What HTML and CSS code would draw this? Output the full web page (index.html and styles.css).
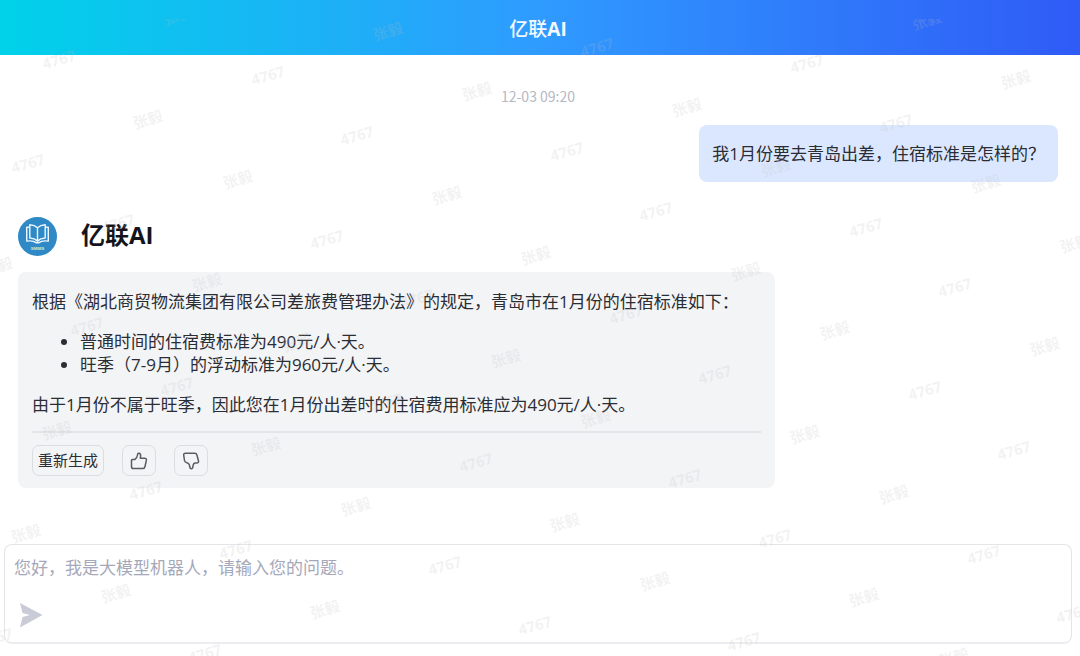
FILE: index.html
```
<!DOCTYPE html>
<html lang="zh-CN">
<head>
<meta charset="utf-8">
<meta name="viewport" content="width=device-width, initial-scale=1">
<title>亿联AI</title>
<link rel="stylesheet" href="styles.css">
</head>
<body>
<div class="app">
  <header class="topbar"><h1 class="topbar-title">亿联<b>AI</b></h1></header>

  <main class="chat">
    <time class="chat-time">12-03 09:20</time>
    <p class="question">我1月份要去青岛出差，住宿标准是怎样的？</p>

    <section class="reply">
      <div class="bot">
        <svg class="bot-avatar" viewBox="0 0 38 38" aria-hidden="true">
          <circle cx="19" cy="19" r="19" fill="#2f89c7"/>
          <g fill="none" stroke="#e9f5fc" stroke-width="1.4" stroke-linejoin="round" stroke-linecap="round">
            <path d="M19 10.500C17 8.500 14.500 7.700 11.500 7.500V20.500C14.500 20.700 17 21.500 19 23.500C21 21.500 23.500 20.700 26.500 20.500V7.500C23.500 7.700 21 8.500 19 10.500V23"/>
            <path d="M11 10H8.500V23.500C12 23 15.500 23.300 17.500 25H20.500C22.500 23.300 26 23 29.500 23.500V10H27"/>
          </g>
          <text class="bot-avatar-label" x="19" y="32.500" text-anchor="middle">SMIMS</text>
        </svg>
        <h2 class="bot-name">亿联AI</h2>
      </div>

      <article class="card">
        <p>根据《湖北商贸物流集团有限公司差旅费管理办法》的规定，青岛市在1月份的住宿标准如下：</p>
        <ul>
          <li>普通时间的住宿费标准为490元/人·天。</li>
          <li>旺季（7-9月）的浮动标准为960元/人·天。</li>
        </ul>
        <p>由于1月份不属于旺季，因此您在1月份出差时的住宿费用标准应为490元/人·天。</p>
        <hr>
        <div class="actions">
          <button class="action action-text" type="button">重新生成</button>
          <button class="action action-icon" type="button" aria-label="赞">
            <svg class="thumb" viewBox="0 0 18 18" aria-hidden="true"><path d="M2.200 7.500H4.800C6.500 6.500 7.200 5 7.500 3C7.700 1.300 8.500 1 9.300 1.200C10.600 1.500 10.700 3 10.600 4.200L10.300 6.200H14.500C16 6.200 16.600 7 16.400 8.200L15 14.500C14.700 15.900 14 16.600 12.700 16.600H3.400C2.200 16.600 1.500 16 1.500 14.800V8.300Q1.500 7.500 2.200 7.500Z"/></svg>
          </button>
          <button class="action action-icon" type="button" aria-label="踩">
            <svg class="thumb thumb-down" viewBox="0 0 18 18" aria-hidden="true"><path d="M3.400 1.300H12.800C14 1.300 14.700 2 15 3.200L16.500 9C16.800 10.300 16.100 11 14.800 11L13 11.100C12 11.300 11.400 12 11.200 13L10.700 15.600C10.500 16.500 10 16.900 9.300 16.800C8.400 16.700 8 16 7.800 15L7.300 12.700C7 11.500 6.200 11 4.900 10.700C3.500 10.400 2.600 9.800 2.500 8.500L1.700 3.200C1.500 2 2.200 1.300 3.400 1.300Z"/></svg>
          </button>
        </div>
      </article>
    </section>
  </main>

  <form class="composer">
    <textarea class="composer-input" rows="1" aria-label="问题" placeholder="您好，我是大模型机器人，请输入您的问题。"></textarea>
    <button class="send" type="button" aria-label="发送">
      <svg class="send-icon" viewBox="0 0 24 26" aria-hidden="true"><path d="M1 1L23.500 13L1 25.500L3.500 15L11 13L3.500 11Z"/></svg>
    </button>
  </form>

  <svg class="watermark" aria-hidden="true"></svg>
</div>
<script src="watermark.js"></script>
</body>
</html>
```
FILE: styles.css
```
* {
  box-sizing: border-box;
}

body {
  margin: 0;
  background: #fff;
  color: #2b2d34;
  font-family: "Open Sans", "Noto Sans CJK SC", sans-serif;
  font-size: 17px;
  line-height: 23px;
}

h1, h2, p, ul {
  margin: 0;
}

button, textarea {
  font: inherit;
  color: inherit;
}

.app {
  position: relative;
  display: flex;
  flex-direction: column;
  min-height: 100vh;
  overflow: hidden;
}

.topbar {
  display: flex;
  align-items: center;
  justify-content: center;
  height: 55px;
  padding: 4px 4px 0 0;
  background: linear-gradient(90deg, #00d2e9 0%, #2f9bff 50%, #2f5bf6 100%);
}

.topbar-title {
  color: #f3f8ff;
  font-size: 19px;
  font-weight: 500;
}

.chat {
  display: flex;
  flex: 1;
  flex-direction: column;
  padding: 30px 22px 0 18px;
}

.chat-time {
  align-self: center;
  color: #b6b8c3;
  font-family: "Noto Sans CJK SC", sans-serif;
  font-size: 14px;
}

.question {
  align-self: flex-end;
  margin-top: 17px;
  padding: 17px 13px;
  border-radius: 8px;
  background: #dbe7ff;
}

.reply {
  margin-top: 35px;
}

.bot {
  display: flex;
  align-items: center;
  gap: 24px;
}

.bot-avatar {
  width: 39px;
  height: 39px;
}

.bot-avatar-label {
  fill: #d9edc9;
  font: bold 4px "Liberation Sans", sans-serif;
}

.bot-name {
  padding-bottom: 4px;
  color: #14151c;
  font-size: 24px;
  font-weight: 700;
}

.card {
  width: calc(100% - 283px);
  margin-top: 16px;
  padding: 18px 14px 12px;
  border-radius: 8px;
  background: #f3f4f6;
}

.card ul {
  margin: 17px 0;
  padding-left: 48px;
}

.card hr {
  height: 2px;
  margin: 15px 0 12px;
  border: 0;
  background: #e4e5e8;
}

.actions {
  display: flex;
  gap: 18px;
}

.action {
  display: flex;
  align-items: center;
  justify-content: center;
  height: 31px;
  padding: 0;
  border: 1px solid #dcdde1;
  border-radius: 7px;
  background: transparent;
}

.action-text {
  width: 72px;
  font-size: 15px;
}

.action-icon {
  width: 34px;
}

.thumb {
  width: 18px;
  height: 18px;
  fill: none;
  stroke: #5b5c62;
  stroke-width: 1.5;
  stroke-linejoin: round;
}

.composer {
  display: flex;
  flex-direction: column;
  align-items: flex-start;
  gap: 21px;
  margin: 0 8px 12px 4px;
  padding: 11px 9px 14px;
  border: 1px solid #e4e5e9;
  border-bottom: 2px solid #ededf1;
  border-radius: 8px;
}

.composer-input {
  display: block;
  width: 100%;
  height: 25px;
  padding: 0;
  border: 0;
  outline: 0;
  background: transparent;
  resize: none;
  overflow: hidden;
}

.composer-input::placeholder {
  color: #a5a8b9;
  opacity: 1;
}

.send {
  display: block;
  padding: 0 5px;
  border: 0;
  background: transparent;
}

.send-icon {
  display: block;
  width: 24px;
  height: 26px;
  fill: #c9cbd6;
}

/* The watermark lies over the whole page and lets clicks through. */
.watermark {
  position: absolute;
  inset: 19px 0 0;
  width: 100%;
  height: calc(100% - 19px);
  pointer-events: none;
  fill: rgba(190, 190, 190, 0.19);
  font-family: "Open Sans", "Noto Sans CJK SC", sans-serif;
  font-size: 15px;
  font-weight: 700;
  text-anchor: middle;
}
```
FILE: watermark.js
```
// Repeats the user's name and number over the page on a slanted grid.
const layer = document.querySelector(".watermark");
const TOP = 19;

function drawWatermark() {
  layer.replaceChildren();
  const width = layer.clientWidth;
  const height = layer.clientHeight;
  for (let i = -40; i <= 40; i++) {
    for (let j = -40; j <= 60; j++) {
      const x = Math.round(148 + 209.4 * i + 89.5 * j);
      const y = Math.round(120 + 16 * i + 59.8 * j) - TOP;
      if (x < -16 || x > width + 16 || y < -8 || y > height + 8) continue;
      const phase = (((j - i) % 4) + 4) % 4;
      const mark = document.createElementNS("http://www.w3.org/2000/svg", "text");
      mark.textContent = phase < 2 ? "张毅" : "4767";
      mark.setAttribute("transform", `translate(${x} ${y}) rotate(-16)`);
      mark.setAttribute("y", "5");
      layer.append(mark);
    }
  }
}

drawWatermark();
window.addEventListener("resize", drawWatermark);
```
